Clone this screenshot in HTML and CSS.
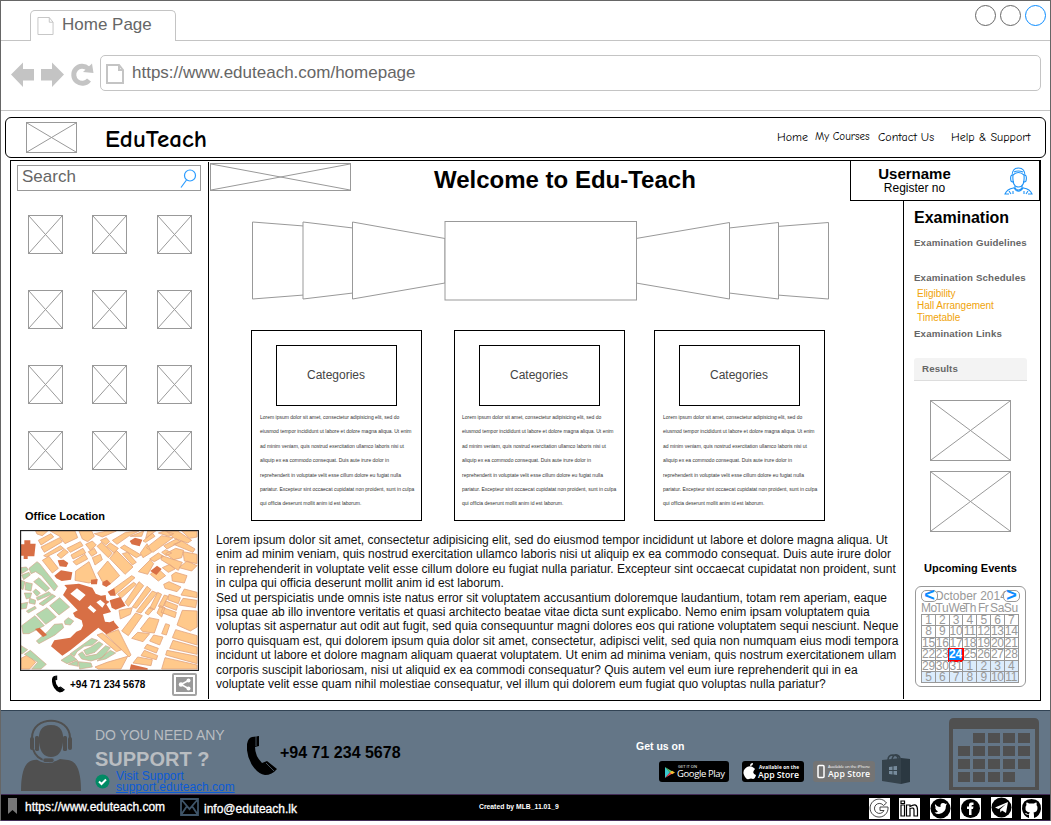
FILE: index.html
```html
<!DOCTYPE html>
<html lang="en">
<head>
<meta charset="utf-8">
<title>Home Page</title>
<link rel="stylesheet" href="styles.css">
</head>
<body>
<svg width="0" height="0" class="defs">
  <defs>
    <symbol id="ph" viewBox="0 0 100 100" preserveAspectRatio="none"><path d="M0 0L100 100M0 100L100 0" stroke="#999" fill="none" vector-effect="non-scaling-stroke"/></symbol>
    <symbol id="phone" viewBox="0 0 30 39"><path d="M5 1 12 0V10L8 11Q8 20 15 27L20 25 30 33Q25 39 18 39Q11 38 5 29Q-1 19 0 8Q1 2 5 1Z"/><path d="M9 0V10M19 27 27 35" stroke="#647687" stroke-width=".7"/></symbol>
    <symbol id="page" viewBox="0 0 18 20"><path d="M1 1H13L17 6V19H1Z" fill="none" stroke="#c4c4c4"/><path d="M13 1V6H17" fill="none" stroke="#c4c4c4"/></symbol>
  </defs>
</svg>
<div class="window">
  <div class="tabs">
    <div class="tab"><svg class="tab-icon"><use href="#page"/></svg><span>Home Page</span></div>
    <div class="dots"><i></i><i></i><i class="blue"></i></div>
  </div>
  <div class="toolbar">
    <svg class="navicons" viewBox="0 0 84 26" width="84" height="26"><g fill="#c4c4c4"><path d="M0 13.500 12 1.500V8H23V19.500H12V26Z"/><path d="M53 13.500 41 1.500V8H30V19.500H41V26Z"/></g><path d="M78 19A8.500 8.500 0 1 1 77 7.500" fill="none" stroke="#c4c4c4" stroke-width="5"/><path d="M81 2.500 82.500 12 72 11Z" fill="#c4c4c4"/></svg>
    <div class="address"><svg class="addr-icon"><use href="#page"/></svg><span>https://www.eduteach.com/homepage</span></div>
  </div>

  <header class="site-header">
    <svg class="ph logo"><use href="#ph"/></svg>
    <h1>EduTeach</h1>
    <nav><a class="n1">Home</a><a class="n2">My Courses</a><a class="n3">Contact Us</a><a class="n4">Help &amp; Support</a></nav>
  </header>

  <main>
    <section class="left">
      <div class="search"><span>Search</span><svg width="17" height="19" viewBox="0 0 17 19"><circle cx="10" cy="6.500" r="5.500"/><path d="M6.500 11 1 18.500"/></svg></div>
      <div class="thumbs">
        <svg class="ph"><use href="#ph"/></svg><svg class="ph"><use href="#ph"/></svg><svg class="ph"><use href="#ph"/></svg>
        <svg class="ph"><use href="#ph"/></svg><svg class="ph"><use href="#ph"/></svg><svg class="ph"><use href="#ph"/></svg>
        <svg class="ph"><use href="#ph"/></svg><svg class="ph"><use href="#ph"/></svg><svg class="ph"><use href="#ph"/></svg>
        <svg class="ph"><use href="#ph"/></svg><svg class="ph"><use href="#ph"/></svg><svg class="ph"><use href="#ph"/></svg>
      </div>
      <h3>Office Location</h3>
      <svg class="map" viewBox="15 15 537 423" preserveAspectRatio="none">
        <rect x="15" y="15" width="537" height="423" fill="#fff"/>
        <g fill="#ffc98b" stroke="#e3a680" stroke-width="2.500">
          <path d="M62 18H98L82 32 66 27ZM70 46 108 26 116 36 78 60ZM78 66 134 38 142 50 88 82ZM106 18H180L188 38 150 56 134 34ZM86 92 136 62 146 70 94 96ZM82 106 102 94 130 130 112 144ZM126 90 148 72 160 82 138 100ZM156 70 196 50 204 62 166 82ZM168 90 204 70 212 84 174 102ZM174 110 210 88 218 102 184 120ZM182 138 222 110 246 166 222 174 180 166ZM192 18H230L238 34 218 50 202 42ZM212 58 232 48 244 60 226 76ZM238 26 276 18 304 18 262 36ZM220 80 238 70 246 84 230 94ZM232 98 256 88 262 104 240 120ZM246 64 260 52 292 84 280 98ZM256 46 274 38 284 50 272 60ZM274 64 286 54 310 70 298 84ZM248 144 278 108 314 152 284 178 262 170ZM284 100 304 76 354 126 330 148ZM316 68 328 60 378 90 364 98ZM322 86 338 82 364 112 352 120ZM292 46 332 22 372 18 340 34 306 58ZM346 34 386 18 380 34ZM376 84 396 56 410 82 384 98ZM384 48 412 24 420 34 392 52ZM398 18H422L392 40ZM394 68 440 32 474 38 414 82ZM430 24 448 18 476 26 462 34ZM454 18H488L530 46 518 54 478 40ZM500 18H546V36L524 40ZM446 62 484 42 496 50 456 72ZM440 82 452 74 470 84 454 92ZM452 86 482 70 506 76 500 98 476 104ZM476 58 500 48 540 72 534 82ZM504 80 546 88V116L508 108ZM440 92 502 112 490 136 438 104ZM404 102 430 84 446 94 418 110ZM370 140 406 104 416 116 398 148ZM406 148 426 128 452 152 430 168ZM442 128 464 118 480 132 460 142ZM470 150 482 142 516 152 508 174 472 168ZM492 128 516 108 546 122 530 138ZM446 178 462 170 498 186 486 200 450 190ZM286 198 350 152 360 158 302 208ZM308 208 356 172 364 178 318 220ZM330 232 372 170 386 182 340 244ZM352 246 396 184 408 194 364 250ZM364 260 412 198 426 204 378 264ZM404 250 428 202 440 208 418 254ZM390 264 404 246 416 252 400 270ZM430 244 448 210 460 214 442 248ZM426 264 436 242 450 248 440 276ZM462 208 496 218 490 236 458 224ZM452 228 488 242 484 256 448 242ZM444 248 484 262 480 278 438 262ZM508 192 546 202V218L498 210ZM504 220 546 226 542 248 492 240ZM502 256 546 258V306L526 318 486 300ZM312 256 352 248 346 268 316 282ZM320 318 362 264 382 272 340 332ZM376 312 402 278 432 284 418 324 384 320ZM440 326 452 296 464 300 454 330ZM350 340 368 322 404 326 384 350ZM404 348 416 330 444 336 434 360ZM396 358 430 370 424 384 388 370ZM388 376 428 392 424 404 378 392ZM368 396 412 404 408 422 354 414ZM482 314 546 332V360L472 338ZM474 346 546 366V388L464 370ZM456 376 546 394V416L452 390ZM450 398 546 420V432H440ZM272 328 310 314 348 390 342 396ZM246 330 262 324 320 374 304 380ZM240 426 276 412 338 394 318 432H250ZM18 400 38 390 62 412 44 432H18Z"/>
        </g>
        <g fill="#b3d7ad" stroke="#d7a68b" stroke-width="2">
          <path d="M18 128 34 126 40 134 20 146ZM42 130 66 110 74 116 128 184 118 198 80 152 62 140 48 146ZM20 150 42 142 46 150 26 164ZM56 170 72 158 104 190 92 200ZM32 172 52 176 48 198 30 194ZM18 166 30 170 24 194 18 190ZM28 204 50 204 46 218 34 222ZM54 200 62 192 76 204 66 214ZM64 218 102 200 110 208 68 226ZM72 236 112 208 122 214 84 242ZM18 236 38 232 34 250 18 252ZM44 220 62 226 60 238 42 234ZM34 258 60 244 64 250 40 264ZM104 242 134 218 164 246 132 270ZM64 268 96 248 124 276 92 298ZM20 302 60 272 88 302 42 326H24ZM148 288 160 278 176 288 166 300 150 298ZM64 348 98 320 118 298 142 296 146 308 120 330 72 356ZM18 362 38 374 22 386H18ZM28 388 46 376 94 418 78 432H50L68 412ZM138 406 166 388 186 404 156 416ZM166 386 230 340 248 346 232 360 208 364 186 380 178 394ZM206 376 228 366 252 350 264 358 240 382 214 390ZM190 388 202 380 212 394 244 388 272 362 286 368 262 398 228 408 200 402ZM160 418 188 406 190 424ZM190 410 228 414 232 426 194 432ZM246 408 286 376 302 384 272 402Z"/>
        </g>
        <g fill="#d86f45">
          <path d="M18 58H28V46H46V56H62L58 94H38V102H26V92H18ZM128 106 146 104 160 114 154 126 134 124ZM118 152 138 136 172 142 168 164 140 168 124 160ZM344 48 360 38 382 44 374 64 350 58ZM406 138 426 122 440 132 424 150ZM228 164 248 162 246 178H228ZM262 172 276 164 288 176 274 186 262 180ZM278 200 298 190 302 212 286 212ZM284 226 316 216 332 242 302 254 290 248ZM148 180 192 176 232 188 242 206 258 212 272 210 274 226 284 230 274 238 290 264 298 292 312 308 274 328 250 308 168 374 142 392 108 364 118 346 166 338 184 320 198 314 204 302 200 286 180 276 174 264 188 256 158 224 144 210 156 190ZM60 312 74 308 96 330 84 336ZM348 418 398 430V434H344Z"/>
        </g>
        <path d="M166 206 186 190 212 210 194 228ZM218 248 226 240 244 256 236 264ZM244 232 256 224 270 236 262 248ZM264 268 286 262 292 258 308 282 284 292 270 290Z" fill="#fff"/>
        <rect x="16.500" y="16.500" width="534" height="420" fill="none" stroke="#222" stroke-width="4"/>
      </svg>
      <div class="contact"><svg class="c-phone"><use href="#phone"/></svg><b>+94 71 234 5678</b>
        <svg class="share" width="25" height="23" viewBox="0 0 25 23"><rect x="1" y="1" width="23" height="21" rx="1" fill="#fff" stroke="#a3a3a3" stroke-width="2"/><rect x="4" y="4" width="17" height="15" fill="#999"/><path d="M16.500 7.500 9 11.500 16.500 15.500" stroke="#fff" stroke-width="1.500" fill="none"/><g fill="#fff"><circle cx="16.500" cy="7.500" r="2"/><circle cx="9" cy="11.500" r="2.200"/><circle cx="16.500" cy="15.500" r="2"/></g></svg>
      </div>
    </section>

    <div class="rest">
      <div class="top-row">
        <svg class="ph banner"><use href="#ph"/></svg>
        <h2>Welcome to Edu-Teach</h2>
        <div class="user">
          <div class="who"><b>Username</b><span>Register no</span></div>
          <svg width="29" height="28" viewBox="0 0 29 28"><g fill="none" stroke="#1d92f7" stroke-width="1.100"><path d="M9 8Q14.500 3 20 8Q21 20 14.500 20Q8 20 9 8Z"/><path d="M8 9Q8 1 14.500 1T21 9M7.500 8Q6 10 7 14Q9 16 9.500 14M21.500 8Q23 10 22 14Q20 16 19.500 14M10 5Q14 3 19 5M11 19V21Q14.500 25 18 21V19M9.500 20.500Q14.500 28 19.500 20.500M9.500 21Q3 22 1 27H5M19.500 21Q26 22 28 27H24M5 24 7 27M24 24 22 27M9 24V27M20 24V27"/></g></svg>
        </div>
      </div>
      <div class="columns">
        <section class="center">
          <svg class="carousel" width="578" height="80" viewBox="0 0 578 80"><g fill="#fff" stroke="#999"><path d="M.5 1 52 5V74L.5 78Z"/><path d="M51 1 101 7V72L51 78Z"/><path d="M100.500 1 193 17.500V62L100.500 78Z"/><path d="M576.500 1.500 525 5.500V74L576.500 78Z"/><path d="M526.500 1.500 477 7V72L526.500 78Z"/><path d="M477.500 1.500 384 17.500V62L477.500 78Z"/><rect x="193" y=".5" width="191.500" height="78.500"/></g></svg>
          <div class="cards">
            <article><div class="cat">Categories</div><p><span>Lorem ipsum dolor sit amet, consectetur adipisicing elit, sed do</span><span>eiusmod tempor incididunt ut labore et dolore magna aliqua. Ut enim</span><span>ad minim veniam, quis nostrud exercitation ullamco laboris nisi ut</span><span>aliquip ex ea commodo consequat. Duis aute irure dolor in</span><span>reprehenderit in voluptate velit esse cillum dolore eu fugiat nulla</span><span>pariatur. Excepteur sint occaecat cupidatat non proident, sunt in culpa</span><span>qui officia deserunt mollit anim id est laborum.</span></p></article>
            <article><div class="cat">Categories</div><p class="mid"><span>Lorem ipsum dolor sit amet, consectetur adipisicing elit, sed do</span><span>eiusmod tempor incididunt ut labore et dolore magna aliqua. Ut enim</span><span>ad minim veniam, quis nostrud exercitation ullamco laboris nisi ut</span><span>aliquip ex ea commodo consequat. Duis aute irure dolor in</span><span>reprehenderit in voluptate velit esse cillum dolore eu fugiat nulla</span><span>pariatur. Excepteur sint occaecat cupidatat non proident, sunt in culpa</span><span>qui officia deserunt mollit anim id est laborum.</span></p></article>
            <article><div class="cat">Categories</div><p><span>Lorem ipsum dolor sit amet, consectetur adipisicing elit, sed do</span><span>eiusmod tempor incididunt ut labore et dolore magna aliqua. Ut enim</span><span>ad minim veniam, quis nostrud exercitation ullamco laboris nisi ut</span><span>aliquip ex ea commodo consequat. Duis aute irure dolor in</span><span>reprehenderit in voluptate velit esse cillum dolore eu fugiat nulla</span><span>pariatur. Excepteur sint occaecat cupidatat non proident, sunt in culpa</span><span>qui officia deserunt mollit anim id est laborum.</span></p></article>
          </div>
          <p class="copy"><span>Lorem ipsum dolor sit amet, consectetur adipisicing elit, sed do eiusmod tempor incididunt ut labore et dolore magna aliqua. Ut</span><span>enim ad minim veniam, quis nostrud exercitation ullamco laboris nisi ut aliquip ex ea commodo consequat. Duis aute irure dolor</span><span>in reprehenderit in voluptate velit esse cillum dolore eu fugiat nulla pariatur. Excepteur sint occaecat cupidatat non proident, sunt</span><span>in culpa qui officia deserunt mollit anim id est laborum.</span><span>Sed ut perspiciatis unde omnis iste natus error sit voluptatem accusantium doloremque laudantium, totam rem aperiam, eaque</span><span>ipsa quae ab illo inventore veritatis et quasi architecto beatae vitae dicta sunt explicabo. Nemo enim ipsam voluptatem quia</span><span>voluptas sit aspernatur aut odit aut fugit, sed quia consequuntur magni dolores eos qui ratione voluptatem sequi nesciunt. Neque</span><span>porro quisquam est, qui dolorem ipsum quia dolor sit amet, consectetur, adipisci velit, sed quia non numquam eius modi tempora</span><span>incidunt ut labore et dolore magnam aliquam quaerat voluptatem. Ut enim ad minima veniam, quis nostrum exercitationem ullam</span><span>corporis suscipit laboriosam, nisi ut aliquid ex ea commodi consequatur? Quis autem vel eum iure reprehenderit qui in ea</span><span>voluptate velit esse quam nihil molestiae consequatur, vel illum qui dolorem eum fugiat quo voluptas nulla pariatur?</span></p>
        </section>
        <aside>
          <h2>Examination</h2>
          <h4>Examination Guidelines</h4>
          <h4 class="sched">Examination Schedules</h4>
          <ul><li>Eligibility</li><li>Hall Arrangement</li><li>Timetable</li></ul>
          <h4>Examination Links</h4>
          <div class="results">Results</div>
          <svg class="ph side"><use href="#ph"/></svg>
          <svg class="ph side"><use href="#ph"/></svg>
          <h3>Upcoming Events</h3>
          <div class="calendar">
            <div class="cal-head"><b>&lt;</b><span>October 2014</span><b>&gt;</b></div>
            <div class="week"><span>Mo</span><span>Tu</span><span>We</span><span>Th</span><span>Fr</span><span>Sa</span><span>Su</span></div>
            <div class="days"><i>1</i><i>2</i><i>3</i><i>4</i><i>5</i><i>6</i><i>7</i><i>8</i><i>9</i><i>10</i><i>11</i><i>12</i><i>13</i><i>14</i><i>15</i><i>16</i><i>17</i><i>18</i><i>19</i><i>20</i><i>21</i><i>22</i><i>23</i><i class="today">24</i><i>25</i><i>26</i><i>27</i><i>28</i><i>29</i><i>30</i><i>31</i><i class="next">1</i><i class="next">2</i><i class="next">3</i><i class="next">4</i><i class="next">5</i><i class="next">6</i><i class="next">7</i><i class="next">8</i><i class="next">9</i><i class="next">10</i><i class="next">11</i></div>
          </div>
        </aside>
      </div>
    </div>
  </main>

  <footer>
    <div class="support">
      <svg class="agent" width="60" height="72" viewBox="0 0 60 72"><g fill="#505050"><path d="M0 72Q0 42 13 41L21 40Q30 46 39 40L47 41Q60 42 60 72Z"/><path d="M30 6C40 6 43 13 42 23C41 33 37 38 30 38S19 33 18 23C17 13 20 6 30 6Z"/><rect x="9" y="18" width="4" height="13" rx="2"/><rect x="14" y="17" width="4" height="15" rx="1.500"/><rect x="42" y="17" width="4" height="15" rx="1.500"/><rect x="47" y="18" width="4" height="13" rx="2"/></g><path d="M12 31Q15 42 28 42" fill="none" stroke="#647687" stroke-width="4"/><path d="M11 19C11-4 49-4 49 19M12 30Q15 40 26 42" fill="none" stroke="#505050" stroke-width="2"/><rect x="22" y="39" width="11" height="4.500" rx="2" fill="#505050" stroke="#647687" stroke-width=".7"/></svg>
      <div class="ask"><span class="need">DO YOU NEED ANY</span><b>SUPPORT ?</b>
        <div class="visit"><svg width="15" height="15" viewBox="0 0 15 15"><circle cx="7.500" cy="7.500" r="7" fill="#008a64"/><path d="M4 7.500 6.500 10 11 5.500" fill="none" stroke="#fff" stroke-width="2"/></svg><div><span>Visit Support</span><u>support.eduteach.com</u></div></div></div>
      <svg class="f-phone"><use href="#phone"/></svg>
      <b class="number">+94 71 234 5678</b>
      <div class="stores"><b>Get us on</b>
        <div class="badges">
          <svg width="70" height="21" viewBox="0 0 70 21"><rect width="70" height="21" rx="3"/><path d="M6 6V17L11 11.500Z" fill="#3bc9cf"/><path d="M6 6 15 11.500H11Z" fill="#62cb70"/><path d="M6 17 15 11.500H11Z" fill="#ee4657"/><path d="M11 11.500 13 9.800 16 11.500 13 13.200Z" fill="#f6bd32"/><text x="19" y="6.500" font-size="4" textLength="19">GET IT ON</text><text x="18" y="15.500" font-size="9.500" textLength="48">Google Play</text></svg>
          <svg width="62" height="21" viewBox="0 0 62 21"><rect width="62" height="21" rx="3"/><path d="M12 7Q9 4 5 6Q0 9 2 14Q4 19 7 18Q9 17 11 18Q13 18 14 14Q9 12 13 8ZM8 5Q8 2 11 2Q11 5 8 5Z" fill="#fff"/><text x="17" y="7.500" font-size="4.700" font-weight="bold" textLength="40">Available on the</text><text x="16" y="16.500" font-size="8.700" font-weight="600" textLength="41">App Store</text></svg>
          <svg width="62" height="21" viewBox="0 0 62 21"><rect width="62" height="21" rx="3" fill="#747474"/><rect x="5" y="4.500" width="6" height="12" rx="1" fill="none" stroke="#fff" stroke-width="1.500"/><text x="15" y="7" font-size="4" textLength="42">Available on the iPhone</text><text x="15" y="16" font-size="8.700" font-weight="600" textLength="42">App Store</text></svg>
          <svg class="bag" width="28" height="31" viewBox="0 0 28 31"><path d="M0 6 19 4V30L0 27Z" fill="#35424b"/><path d="M19 4 28 5V28L19 30Z" fill="#2b3841"/><path d="M6 6Q6 1 11 1T16 5M10 5Q12 0 15 1T18 5" fill="none" stroke="#35424b" stroke-width="1.500"/><path d="M7 13 10.500 12.500V16H7ZM11.500 12.300 15 12V16H11.500ZM7 17H10.500V20.500L7 20ZM11.500 17H15V21L11.500 20.500Z" fill="#778b9c"/></svg>
        </div>
      </div>
      <svg class="bigcal" width="90" height="72" viewBox="0 0 90 72"><path fill-rule="evenodd" d="M5 0H85Q90 0 90 5V72H0V5Q0 0 5 0ZM4 11V69H86V11Z"/><path d="M24 15H36V25H24ZM39 15H51V25H39ZM54 15H66V25H54ZM69 15H81V25H69ZM9 28H21V38H9ZM24 28H36V38H24ZM39 28H51V38H39ZM54 28H66V38H54ZM69 28H81V38H69ZM9 41H21V51H9ZM24 41H36V51H24ZM39 41H51V51H39ZM54 41H66V51H54ZM69 41H81V51H69ZM9 54H21V64H9ZM24 54H36V64H24ZM39 54H51V64H39ZM54 54H66V64H54Z"/></svg>
    </div>
    <div class="bar">
      <svg class="mark" width="9" height="16" viewBox="0 0 9 16"><path d="M0 0H9V16L4.500 12 0 16Z" fill="#777"/></svg>
      <span class="url">https://www.eduteach.com</span>
      <svg class="mail" width="19" height="18" viewBox="0 0 19 18"><path d="M1 1H18V17H1ZM1 1 9.500 11 18 1M1 17 7 8M18 17 12 8" fill="none" stroke="#3e5468" stroke-width="1.800"/></svg>
      <span class="email">info@eduteach.lk</span>
      <b class="created">Created by MLB_11.01_9</b>
      <div class="social">
        <svg viewBox="0 0 21 21"><rect width="21" height="21" fill="#fff"/><path d="M17.500 5A9 9 0 1 0 19 9H11V12.500H15A5 5 0 1 1 14.500 7.500Z" fill="none" stroke="#333" stroke-width=".9"/></svg>
        <svg viewBox="0 0 21 21"><rect width="21" height="21" fill="#fff"/><path d="M2 7H5.500V18H2ZM2 3H5.500V5.500H2ZM7.500 7H11V8.500Q18.500 4 18.500 12V18H15V12Q15 9 11 10.500V18H7.500Z" fill="none" stroke="#000" stroke-width="1.200"/></svg>
        <svg viewBox="0 0 21 21"><rect width="21" height="21" fill="#fff"/><circle cx="10.500" cy="10.500" r="10"/><path d="M5 6Q7 9 10.500 9Q10 5 13 5Q14.500 5 15.500 6L17 5.500 16 7.500Q16 15 9 16Q6 16 4.500 14.500Q7 14.500 8 13.500Q5.500 12 5 9.500H6Q4.500 8 5 6Z" fill="#fff"/></svg>
        <svg viewBox="0 0 21 21"><rect width="21" height="21" fill="#fff"/><circle cx="10.500" cy="10.500" r="9.500"/><path d="M9 17V11H7V8.500H9Q8.500 4.500 11.500 4.500H13.500V7H12Q11.500 7 11.500 8.500H13.500L13 11H11.500V17Z" fill="#fff"/></svg>
        <svg class="tg" viewBox="0 0 21 21"><rect width="21" height="21" fill="#fff"/><circle cx="10.500" cy="10.500" r="10"/><path d="M4 10.500 17 5 15 16 11 13.500 9.500 15.500 9 12.500 15 7 7.500 12Z" fill="#fff"/></svg>
        <svg viewBox="0 0 21 21"><rect width="21" height="21" fill="#fff"/><path d="M8 20V16.500Q5 17.500 4 15Q5 14.500 6.500 16H8Q8 15 9 14.500Q4 14 4.500 9.500Q4.500 8 5.500 7Q5 5.500 5.500 4.500Q7 4.500 8 5.500H13Q14 4.500 15.500 4.500Q16 6 15.500 7Q16.500 8 16.500 10Q16.500 14 12.500 14.500Q13 15 13 20Q19 18 20 11Q20 1 10.500 1T1 11Q2 18 8 20Z"/></svg>
      </div>
    </div>
  </footer>
</div>
</body>
</html>
```
FILE: styles.css
```css
* { box-sizing: border-box; }
body { margin: 0; background: #fff; font: 12px/14.4px "Liberation Sans", Arial, sans-serif; color: #000; }
h1, h2, h3, h4, p, ul { margin: 0; padding: 0; list-style: none; }
i { font-style: normal; }
svg { display: block; flex: none; }
.defs { position: absolute; }
.ph { border: 1px solid #999; background: #fff; }
.window { width: 1051px; height: 821px; border: 1px solid #666; border-bottom: 0; display: flex; flex-direction: column; overflow: hidden; }

.tabs { height: 40px; border-bottom: 1px solid #c4c4c4; display: flex; justify-content: space-between; }
.tab { margin: 9px 0 -1px 29px; width: 146px; height: 31px; background: #fff; border: 1px solid #c4c4c4; border-bottom: 0; border-radius: 5px 5px 0 0; display: flex; padding: 5px 0 0 6px; font-size: 17px; line-height: 17px; color: #666; }
.tab-icon { width: 17px; height: 20px; margin-right: 8px; }
.dots { display: flex; gap: 4px; padding: 4px 4px 0 0; }
.dots i { width: 21px; height: 21px; border: 1px solid #666; border-radius: 50%; }
.dots .blue { border-color: #0a8cff; }
.toolbar { height: 70px; border-bottom: 1px solid #c4c4c4; display: flex; padding: 14px 9px 0 10px; }
.navicons { margin: 6px 5px 0 0; }
.address { flex: 1; height: 36px; border: 1px solid #c4c4c4; border-radius: 5px; display: flex; padding: 8px 0 0 5px; font-size: 17px; line-height: 18px; color: #666; }
.addr-icon { width: 18px; height: 20px; margin-right: 8px; stroke-width: 2; }

.site-header { margin: 6px 4px 0; height: 41px; border: 1px solid #000; border-radius: 6px; display: flex; align-items: center; font-family: "Comic Sans MS", "Comic Neue", "Comic Relief", cursive; }
.logo { width: 51px; height: 31px; margin-left: 20px; }
h1 { margin: 3px 0 0 28px; font-size: 25px; line-height: 30px; }
nav { display: flex; margin-left: auto; font-size: 12px; padding-right: 16px; white-space: nowrap; }
.n1 { width: 38px; }
.n2 { width: 63px; font-size: 11px; letter-spacing: -.05px; }
.n3 { width: 73px; }
.n4 { width: 78px; }

main { margin: 2px 9px 0; height: 541px; border: 1px solid #000; display: flex; }
.left { width: 198px; height: 537px; margin-top: 1px; border-right: 1px solid #000; padding: 3px 0 0 6px; }
.search { width: 184px; height: 26px; border: 1px solid #999; display: flex; justify-content: space-between; padding: 2px 3px 0 4px; font-size: 17px; line-height: 18px; color: #666; }
.search svg { margin-top: 1px; fill: none; stroke: #2a9bff; stroke-width: 1.200; }
.thumbs { margin: 24px 0 0 11px; display: grid; grid-template-columns: 64px 65px 35px; grid-template-rows: 75px 75px 66px 39px; }
.thumbs svg { width: 35px; height: 39px; }
.left h3 { margin: 39px 0 0 8px; font-size: 11px; line-height: 14px; font-weight: bold; }
.map { width: 179px; height: 141px; margin: 7px 0 0 3px; }
.contact { display: flex; padding-left: 35px; height: 26px; align-items: center; font-size: 10px; }
.contact b { padding-top: 2px; }
.c-phone { width: 13px; height: 20px; margin-right: 5px; }
.share { margin-left: auto; margin-right: 11px; }

.rest { flex: 1; }
.top-row { height: 40px; display: flex; }
.banner { width: 141px; height: 28px; margin: 2px 0 0 1px; }
.top-row h2 { margin: 7px 0 0 83px; font-size: 24px; line-height: 24px; white-space: nowrap; }
.user { width: 190px; height: 40px; margin-left: auto; border: 1px solid #000; border-top: 0; display: flex; padding: 5px 6px 0 0; }
.who { width: 127px; margin-right: auto; text-align: center; }
.who b { display: block; font-size: 15px; line-height: 15px; }
.who span { display: block; }
.user svg { margin-top: 1px; }
.columns { display: flex; }
.center { width: 694px; }
.carousel { margin: 20px 0 0 43px; }
.cards { margin: 29px 0 0 42px; display: flex; }
article { width: 171px; height: 191px; border: 1px solid #000; margin-right: 32px; padding-top: 14px; }
article + article { margin-right: 29px; }
article p { padding: 4px 0 0 8px; font-size: 5px; color: #333; white-space: nowrap; }
article .mid { padding-left: 7px; }
article p span, .copy span { display: block; }
.cat { width: 121px; height: 61px; margin-left: 24px; border: 1px solid #000; padding-right: 1px; text-align: center; line-height: 59px; color: #444; }
.copy { margin: 12px 0 0 7px; white-space: nowrap; color: #111; }

aside { flex: 1; height: 498px; border-left: 1px solid #000; padding: 8px 0 0 10px; }
aside h2 { font-size: 16px; line-height: 18px; }
aside h4 { font-size: 9.700px; letter-spacing: .14px; line-height: 12px; color: #666; margin-top: 10px; white-space: nowrap; }
aside .sched { margin-top: 23px; }
aside ul { margin: 4px 0 -6px 3px; font-size: 10px; line-height: 12px; color: #f0a30a; letter-spacing: -.03px; }
.results { margin-top: 18px; width: 113px; height: 23px; background: #f3f3f3; border-bottom: 1px solid #ddd; border-radius: 3px 3px 0 0; padding-left: 8px; line-height: 21px; font-size: 9.700px; letter-spacing: .14px; font-weight: bold; color: #666; }
.side { width: 81px; height: 61px; margin: 19px 0 0 16px; }
.side + .side { margin-top: 10px; }
aside h3 { margin: 29px 0 0 10px; font-size: 11px; line-height: 14px; }
.calendar { margin: 11px 0 0 1px; width: 111px; height: 101px; border: 1px solid #999; border-radius: 6px; padding: 3px 6px; color: #999; }
.cal-head { display: flex; height: 12px; line-height: 12px; margin: 0 -1px; justify-content: space-between; white-space: nowrap; }
.cal-head b { width: 17px; flex: none; border: 1px solid #999; border-radius: 5px; color: #0a8cff; font-size: 18px; line-height: 8px; text-align: center; background: #fff; position: relative; }
.cal-head span { margin: 0 -8px; }
.week, .days { display: grid; grid-template-columns: repeat(7, 13.800px); line-height: 12px; }
.week { margin-left: -1px; }
.week span { width: 14px; text-align: center; letter-spacing: -0.400px; }
.days { border: solid #999; border-width: 1px 0 0 1px; grid-auto-rows: 11.400px; width: 98px; margin-left: -1px; }
.days i { border: solid #999; border-width: 0 1px 1px 0; text-align: center; line-height: 11px; letter-spacing: -0.300px; }
.days .next { background: #dcecfc; }
.days .today { background: #0a8cff; color: #fff; font-weight: bold; border-color: #f00; box-shadow: 0 0 0 1px #f00; margin: 0 0 0 -1px; }

footer { margin: 9px -1px 0; }
.support { height: 84px; background: #647687; border: 1px solid #314354; border-bottom: 0; display: flex; }
.agent { margin: 8px 0 0 20px; }
.ask { margin: 16px 0 0 14px; width: 152px; color: #b9bdc1; }
.need { display: block; font-size: 14px; line-height: 16px; white-space: nowrap; }
.ask > b { display: block; font-size: 20px; line-height: 22px; margin-top: 5px; }
.visit { display: flex; color: #0b5ad6; line-height: 11px; margin-top: 0; }
.visit > svg { margin: 4px 6px 0 0; }
.visit div { padding-top: 1px; }
.visit span, .visit u { display: block; }
.f-phone { width: 30px; height: 39px; margin: 25px 3px 0 0; }
.number { font-size: 16px; line-height: 18px; margin-top: 33px; width: 356px; white-space: nowrap; }
.stores { padding-top: 28px; color: #fff; font-size: 10.500px; width: 313px; }
.badges { display: flex; padding-left: 23px; margin-top: 8px; }
.badges text { fill: #fff; font-family: "Open Sans", sans-serif; }
.badges svg { margin-right: 13px; }
.badges svg:nth-child(2) { margin-right: 9px; }
.badges svg:nth-child(3) { margin-right: 7px; }
.badges .bag { margin-top: -7px; margin-right: 0; }
.bigcal { margin-top: 7px; fill: #505050; }
.bar { height: 27px; background: #000; border: 1px solid #432d57; display: flex; color: #fff; padding-left: 7px; white-space: nowrap; }
.mark { margin: 3px 8px 0 0; }
.url { width: 155px; line-height: 25px; -webkit-text-stroke: .3px #fff; }
.mail { margin: 3px 5px 0 0; }
.email { width: 275px; line-height: 28px; -webkit-text-stroke: .3px #fff; }
.created { font-size: 6.800px; line-height: 23px; }
.social { display: flex; margin: 3px 8px 0 auto; gap: 9.500px; }
.social svg { width: 21px; height: 21px; }
.social .tg { margin-top: -1px; }
```
